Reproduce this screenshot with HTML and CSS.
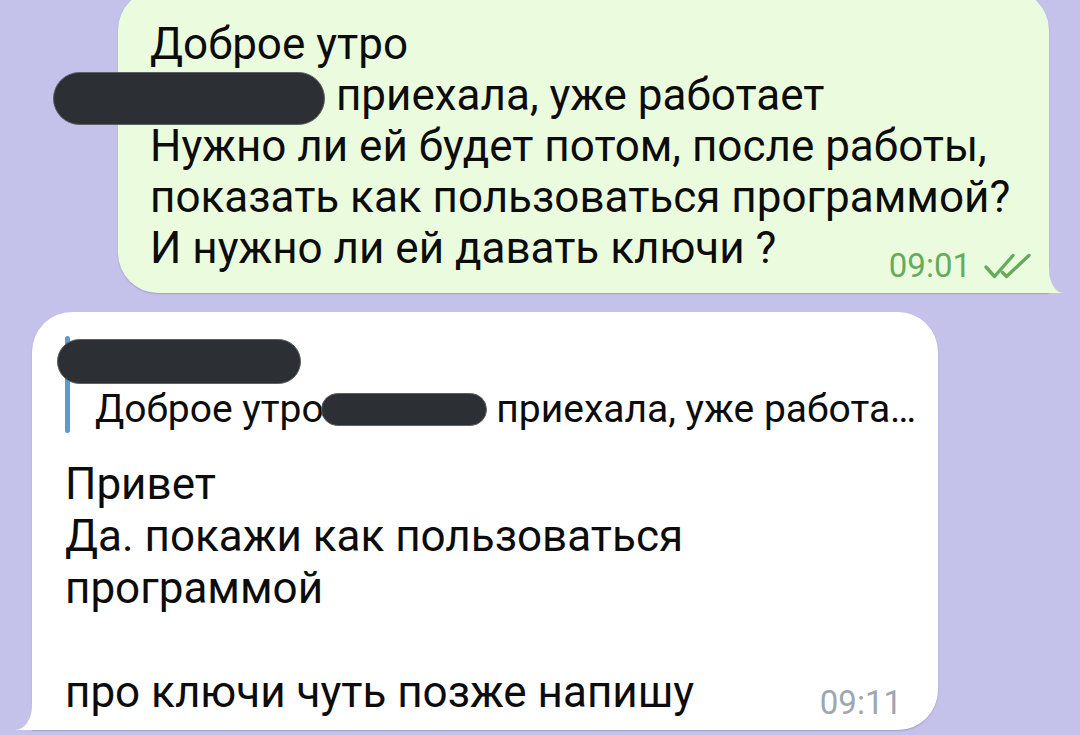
FILE: index.html
```html
<!DOCTYPE html>
<html lang="ru">
<head>
<meta charset="utf-8">
<title>Чат</title>
<link rel="stylesheet" href="styles.css">
</head>
<body>
<div class="chat">
  <div class="bubble out">
    <div class="line">Доброе утро</div>
    <div class="line"><span class="redact redact-line"></span> приехала, уже работает</div>
    <p class="para">Нужно ли ей будет потом, после работы, показать как пользоваться программой?</p>
    <div class="last">
      <span class="last-text">И нужно ли ей давать ключи ?</span>
      <span class="meta meta-out">09:01
        <svg class="checks" width="48" height="28" viewBox="0 0 48 28" aria-hidden="true">
          <path d="M2 15 L10.5 24.5 L29 3.5" fill="none" stroke="currentColor" stroke-width="3.4" stroke-linecap="round" stroke-linejoin="round"/>
          <path d="M18.5 20.5 L22.5 24.5 L45 3.5" fill="none" stroke="currentColor" stroke-width="3.4" stroke-linecap="round" stroke-linejoin="round"/>
        </svg>
      </span>
    </div>
  </div>

  <div class="bubble in">
    <div class="reply">
      <div class="reply-bar"></div>
      <div class="reply-body">
        <div class="reply-name"><span class="redact redact-name"></span></div>
        <div class="reply-text">Доброе утро<span class="redact redact-quote"></span> приехала, уже работа…</div>
      </div>
    </div>
    <p class="para">Привет<br>Да. покажи как пользоваться программой<br><br></p>
    <div class="last">
      <span class="last-text">про ключи чуть позже напишу</span>
      <span class="meta meta-in">09:11</span>
    </div>
  </div>
</div>
</body>
</html>
```

FILE: styles.css
```css
* {
  box-sizing: border-box;
}

html,
body {
  margin: 0;
  padding: 0;
  height: 100%;
  overflow: hidden;
}

body {
  background: #c4c2eb;
  font-family: Roboto, "Noto Sans", "Liberation Sans", sans-serif;
  color: #0c0c0c;
}

.chat {
  display: flex;
  flex-direction: column;
}

/* message bubbles */
.bubble {
  position: relative;
  box-shadow: 0 1px 1.5px rgba(70, 60, 130, 0.28);
}

.out {
  align-self: flex-end;
  width: 931px;
  margin-top: -10px;
  margin-right: 31px;
  padding: 29px 17px 11px 32px;
  background: #ebfcde;
  border-radius: 40px 40px 0 40px;
  font-size: 44px;
  line-height: 51px;
}

.in {
  align-self: flex-start;
  width: 906px;
  margin-top: 19px;
  margin-left: 32px;
  padding: 24px 36px 11px 33px;
  background: #ffffff;
  border-radius: 40px 40px 40px 0;
  font-size: 44px;
  line-height: 52px;
}

/* tails */
.out::before,
.out::after,
.in::before,
.in::after {
  content: "";
  position: absolute;
  bottom: 0;
}

.out::before {
  left: calc(100% - 2px);
  width: 16px;
  height: 24px;
  background: #ebfcde;
}

.out::after {
  left: 100%;
  width: 31px;
  height: 26px;
  background: #c4c2eb;
  border-bottom-left-radius: 14px 24px;
}

.in::before {
  right: calc(100% - 2px);
  width: 19px;
  height: 24px;
  background: #ffffff;
}

.in::after {
  right: 100%;
  width: 32px;
  height: 26px;
  background: #c4c2eb;
  border-bottom-right-radius: 17px 24px;
}

.line {
  height: 51px;
  white-space: nowrap;
}

.para {
  margin: 0;
}

.last {
  display: flex;
  align-items: flex-start;
}

.last-text {
  white-space: nowrap;
}

.meta {
  margin-left: auto;
  display: inline-flex;
  align-items: center;
  font-size: 33px;
  line-height: 33px;
  white-space: nowrap;
}

.meta-out {
  margin-top: 26px;
  gap: 13px;
  color: #66ab5d;
}

.meta-in {
  margin-top: 20px;
  color: #9ea6ae;
}

.checks {
  display: block;
  color: #66ab5d;
}

/* redaction marks */
.redact {
  display: inline-block;
  background: #2c3035;
  border: 1.5px solid #5d6164;
  border-radius: 999px;
}

.redact-line {
  width: 272px;
  height: 53px;
  margin-left: -97px;
  vertical-align: middle;
}

.redact-name {
  width: 244px;
  height: 45px;
  margin-left: -38px;
}

.redact-quote {
  width: 166px;
  height: 33px;
  margin: 0 0 4px -3px;
  vertical-align: middle;
}

/* quoted reply */
.reply {
  display: flex;
  height: 97px;
  margin-bottom: 25px;
}

.reply-bar {
  width: 5px;
  flex: 0 0 5px;
  background: #5b9bd0;
  border-radius: 3px;
}

.reply-body {
  padding-left: 25px;
}

.reply-name {
  height: 50px;
  display: flex;
  align-items: center;
}

.reply-text {
  font-size: 39px;
  line-height: 47px;
  white-space: nowrap;
}
```
